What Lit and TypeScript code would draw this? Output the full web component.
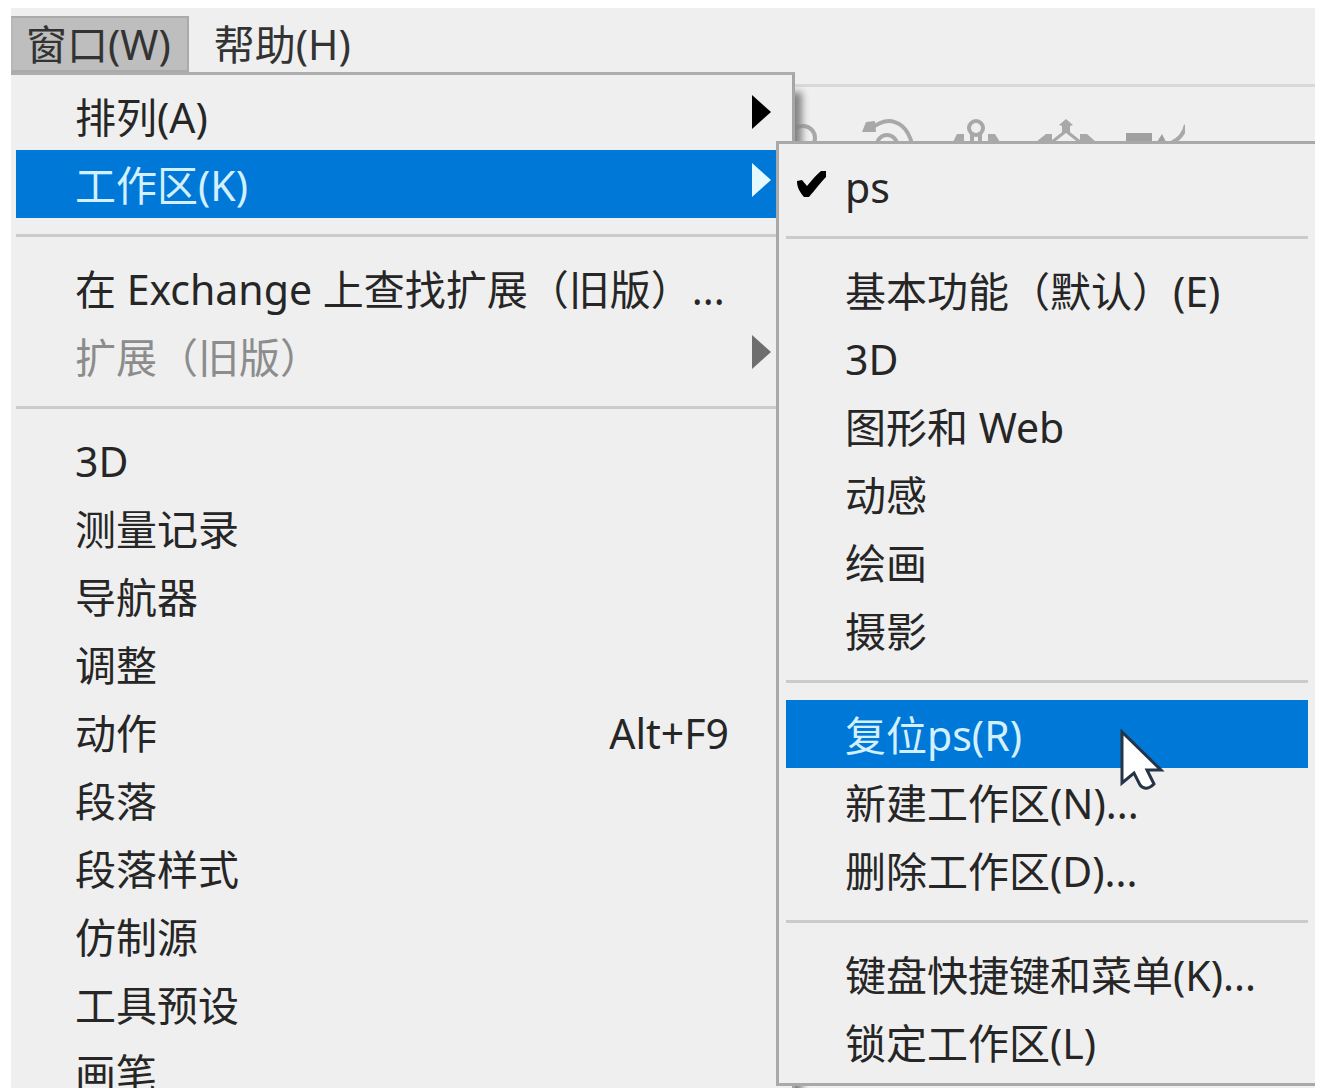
import { LitElement, html, css, svg, nothing } from "lit";
import { customElement } from "lit/decorators.js";
import { classMap } from "lit/directives/class-map.js";

interface Entry {
  label?: string;
  shortcut?: string;
  submenu?: boolean;
  active?: boolean;
  disabled?: boolean;
  checked?: boolean;
  separator?: boolean;
}

const windowMenu: Entry[] = [
  { label: "排列(A)", submenu: true },
  { label: "工作区(K)", submenu: true, active: true },
  { separator: true },
  { label: "在 Exchange 上查找扩展（旧版）..." },
  { label: "扩展（旧版）", submenu: true, disabled: true },
  { separator: true },
  { label: "3D" },
  { label: "测量记录" },
  { label: "导航器" },
  { label: "调整" },
  { label: "动作", shortcut: "Alt+F9" },
  { label: "段落" },
  { label: "段落样式" },
  { label: "仿制源" },
  { label: "工具预设" },
  { label: "画笔" },
];

const workspaceMenu: Entry[] = [
  { label: "ps", checked: true },
  { separator: true },
  { label: "基本功能（默认）(E)" },
  { label: "3D" },
  { label: "图形和 Web" },
  { label: "动感" },
  { label: "绘画" },
  { label: "摄影" },
  { separator: true },
  { label: "复位ps(R)", active: true },
  { label: "新建工作区(N)..." },
  { label: "删除工作区(D)..." },
  { separator: true },
  { label: "键盘快捷键和菜单(K)..." },
  { label: "锁定工作区(L)" },
];

@customElement("menu-list")
export class MenuList extends LitElement {
  static properties = { entries: { attribute: false } };
  declare entries: Entry[];

  constructor() {
    super();
    this.entries = [];
  }

  static styles = css`
    :host {
      display: block;
      box-sizing: border-box;
      background: #efefef;
      padding: 7px 7px 7px 7px;
    }
    .row {
      display: flex;
      align-items: center;
      width: 100%;
      height: 68px;
      margin: 0;
      padding: 2px 14px 0 0;
      border: 0;
      background: none;
      color: #262626;
      font: inherit;
      line-height: 60px;
      text-align: left;
      white-space: nowrap;
    }
    .active {
      background: #0078d7;
      color: #d2f0ff;
    }
    .disabled {
      color: #8c8c8c;
    }
    .mark {
      flex: none;
      width: 59px;
      display: flex;
      padding-left: 10px;
      box-sizing: border-box;
    }
    .mark svg {
      margin-bottom: 4px;
    }
    .label {
      flex: 1;
    }
    .shortcut {
      padding-right: 42px;
    }
    .arrow {
      flex: none;
      margin-bottom: 10px;
      color: #000;
    }
    .active .arrow {
      color: #e4f8ff;
    }
    .disabled .arrow {
      color: #6e6e6e;
    }
    .separator {
      height: 3px;
      margin: 16px 0 17px;
      border: 0;
      background: #cbcbcb;
    }
  `;

  private renderEntry(e: Entry) {
    if (e.separator) return html`<hr class="separator" />`;
    return html`<button
      class=${classMap({ row: true, active: !!e.active, disabled: !!e.disabled })}
      role="menuitem"
      ?disabled=${!!e.disabled}
    >
      <span class="mark"
        >${e.checked
          ? html`<svg width="32" height="28" viewBox="0 0 32 28" aria-hidden="true">
              <path d="M1 10 L6 9 L11 15 C16 9 20 4 25 0 L30 0 L30 6 C25 11 19 19 13 26 L8 26 C4 21 1 17 1 10Z" fill="#000" />
            </svg>`
          : nothing}</span
      >
      <span class="label">${e.label}</span>
      ${e.shortcut ? html`<span class="shortcut">${e.shortcut}</span>` : nothing}
      ${e.submenu
        ? html`<svg class="arrow" width="19" height="34" viewBox="0 0 19 34" aria-hidden="true">
            <path d="M0 0 L19 17 L0 34Z" fill="currentColor" />
          </svg>`
        : nothing}
    </button>`;
  }

  render() {
    return html`${this.entries.map((e) => this.renderEntry(e))}`;
  }
}

@customElement("app-root")
export class AppRoot extends LitElement {
  static styles = css`
    :host {
      display: block;
      box-sizing: border-box;
      height: 100vh;
      padding: 8px 5px 4px 11px;
      background: #fff;
      color: #262626;
      font: 41px "Noto Sans", "Noto Sans CJK SC", sans-serif;
    }
    .window {
      position: relative;
      height: 100%;
      overflow: hidden;
      background: #efefef;
    }
    .menubar {
      display: flex;
      padding-top: 8px;
      height: 56px;
    }
    .menubar button {
      box-sizing: border-box;
      border: 2px solid transparent;
      padding: 0 16px 0 13px;
      background: none;
      color: #333;
      font: inherit;
      line-height: 52px;
      white-space: nowrap;
    }
    .menubar .open {
      border-color: #aaa;
      border-left-color: #b8b8b8;
      background: #bebebe;
      margin-right: 10px;
    }
    .toolbar {
      margin-top: 12px;
      border-top: 3px solid #d8d8d8;
      padding: 28px 130px 0 0;
      display: flex;
      justify-content: flex-end;
    }
    .dropdown {
      position: absolute;
      top: 64px;
      left: 0;
      width: 784px;
      border-top: 3px solid #adadad;
      border-right: 3px solid #a5a5a5;
      padding-left: 5px;
      box-shadow: 7px 20px 7px 0 #858585;
    }
    .flyout {
      position: absolute;
      top: 133px;
      left: 765px;
      right: 0;
      border: 3px solid #a9a9a9;
      border-right: 0;
      padding-top: 8px;
    }
    .cursor {
      position: absolute;
      top: 721px;
      left: 1108px;
    }
  `;

  render() {
    return html`<main class="window">
      <nav class="menubar" role="menubar">
        <button class="open" role="menuitem" aria-expanded="true">窗口(W)</button>
        <button role="menuitem">帮助(H)</button>
      </nav>
      <div class="toolbar" aria-hidden="true">
        <svg width="400" height="40" viewBox="785 115 400 40" fill="none" stroke="#a8a8a8" stroke-width="4">
          ${svg`
          <circle cx="803" cy="138" r="12"/>
          <path d="M872 128 Q888 115 902 126 Q909 132 912 144"/>
          <path d="M862 132 L866 122 L875 121 L876 132Z" fill="#a8a8a8" stroke="none"/>
          <circle cx="887" cy="145" r="10"/>
          <circle cx="976" cy="128" r="7"/>
          <path d="M972 134 V150 M980 134 V150"/>
          <path d="M953 142 L957 134 L964 134 V142Z M988 142 V134 L995 134 L1000 142Z" fill="#a8a8a8" stroke="none"/>
          <path d="M1066 119 L1073 125 L1070 126 V133 H1062 V126 L1059 125Z" fill="#a8a8a8" stroke="none"/>
          <path d="M1052 142 L1066 131 L1080 142" stroke-width="3"/>
          <path d="M1036 142 L1046 134 H1052 V142Z M1096 142 L1087 134 H1080 V142Z" fill="#a8a8a8" stroke="none"/>
          <path d="M1126 133 H1152 V150 H1126Z M1157 142 L1162 134 L1166 142Z" fill="#a0a0a0" stroke="none"/>
          <path d="M1171 143 Q1183 138 1186 125"/>`}
        </svg>
      </div>
      <menu-list class="dropdown" role="menu" aria-label="窗口" .entries=${windowMenu}></menu-list>
      <menu-list class="flyout" role="menu" aria-label="工作区" .entries=${workspaceMenu}></menu-list>
      <svg class="cursor" width="48" height="66" viewBox="0 0 48 66" aria-hidden="true">
        <path d="M3 3 V54 L15 44 L21 56 Q27 63 35 55 L28 41 H42Z" fill="#fff" stroke="#253447" stroke-width="3" />
      </svg>
    </main>`;
  }
}
